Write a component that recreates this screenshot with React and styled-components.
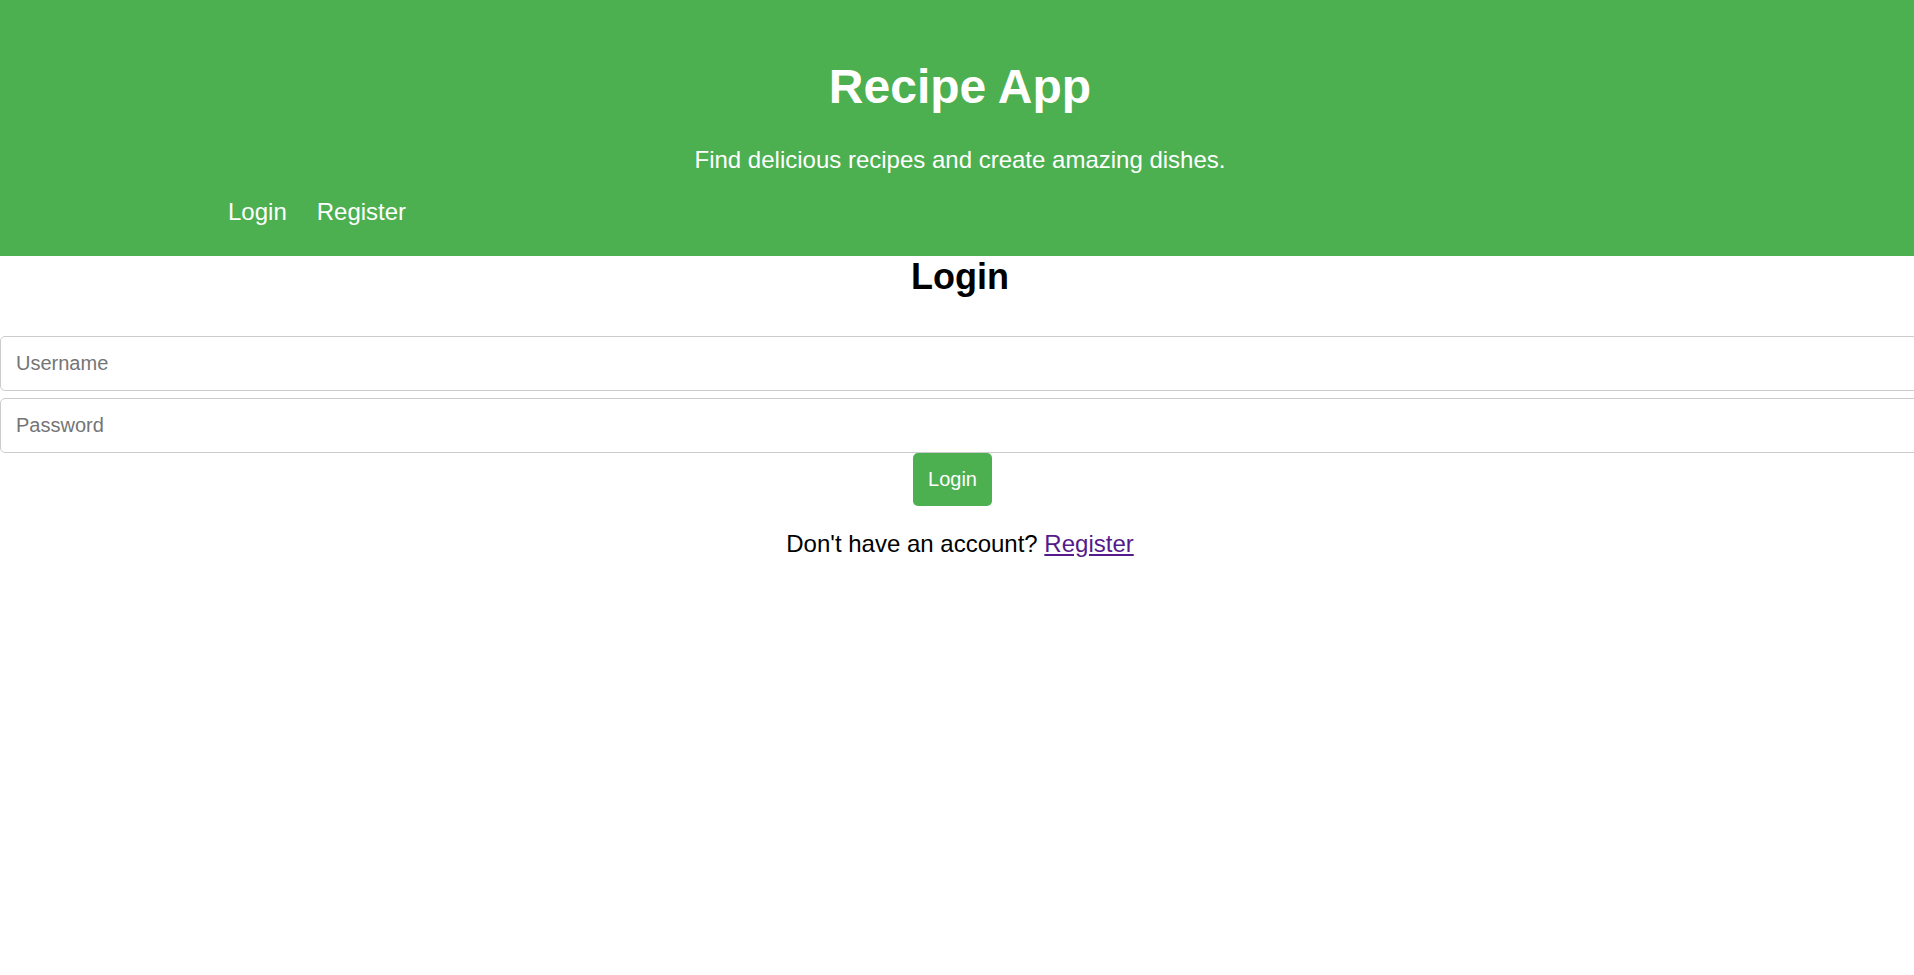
import { useState } from "react";
import styled, { createGlobalStyle } from "styled-components";

const GlobalStyle = createGlobalStyle`
    body {
        margin: 0;
        font-family: "Liberation Sans", Arial, sans-serif;
        font-size: 24px;
        background-color: white;
    }
`;

const App = () => {
    const [username, setUsername] = useState("");
    const [password, setPassword] = useState("");

    const Submit = (event) => {
        event.preventDefault();
    }

    return (
    <Page>
        <GlobalStyle/>
        <Header>
            <Title>Recipe App</Title>
            <Tagline>Find delicious recipes and create amazing dishes.</Tagline>
            <Nav>
                <NavLink href="#login">Login</NavLink>
                <NavLink href="#register">Register</NavLink>
            </Nav>
        </Header>
        <Section>
            <Heading>Login</Heading>
            <form onSubmit={Submit}>
                <Input placeholder="Username" value={username} onChange={(event) => setUsername(event.target.value)}/>
                <Input type="password" placeholder="Password" value={password} onChange={(event) => setPassword(event.target.value)}/>
                <ButtonRow>
                    <LoginButton type="submit">Login</LoginButton>
                </ButtonRow>
            </form>
            <Prompt>Don't have an account? <a href="#register">Register</a></Prompt>
        </Section>
    </Page>
    )
}

const Page = styled.div`
    width: 100%;
    min-height: 100vh;
    overflow-x: hidden;
`;

const Header = styled.header`
    background-color: #4caf50;
    color: white;
    text-align: center;
    padding: 59px 0 30px 6px;
`;

const Title = styled.h1`
    font-size: 48px;
    font-weight: 700;
    margin: 0 0 32px;
`;

const Tagline = styled.p`
    font-size: 24px;
    margin: 0 0 24px;
`;

const Nav = styled.nav`
    display: flex;
    gap: 30px;
    padding-left: 222px;
`;

const NavLink = styled.a`
    color: white;
    text-decoration: none;
    font-size: 24px;
`;

const Section = styled.main`
    text-align: center;
`;

const Heading = styled.h2`
    font-size: 36px;
    font-weight: 700;
    margin: 0 0 38px;
    padding-left: 6px;
    line-height: normal;
`;

const Input = styled.input`
    display: block;
    width: 100%;
    margin: 0;
    padding: 15px;
    font-family: "Liberation Sans", Arial, sans-serif;
    font-size: 20px;
    border: 1px solid #ccc;
    border-radius: 5px;
    background-color: white;
    & + & {
        margin-top: 7px;
    }
    &::placeholder {
        color: #757575;
    }
`;

const ButtonRow = styled.div`
    text-align: center;
    padding-right: 9px;
`;

const LoginButton = styled.button`
    padding: 15px;
    font-family: "Liberation Sans", Arial, sans-serif;
    font-size: 20px;
    color: white;
    background-color: #4caf50;
    border: none;
    border-radius: 5px;
    cursor: pointer;
    &:hover {
        background-color: #45a049;
    }
`;

const Prompt = styled.p`
    font-size: 24px;
    margin: 24px 0;
    padding-left: 6px;
    & > a {
        color: #551a8b;
    }
`;

export default App;
